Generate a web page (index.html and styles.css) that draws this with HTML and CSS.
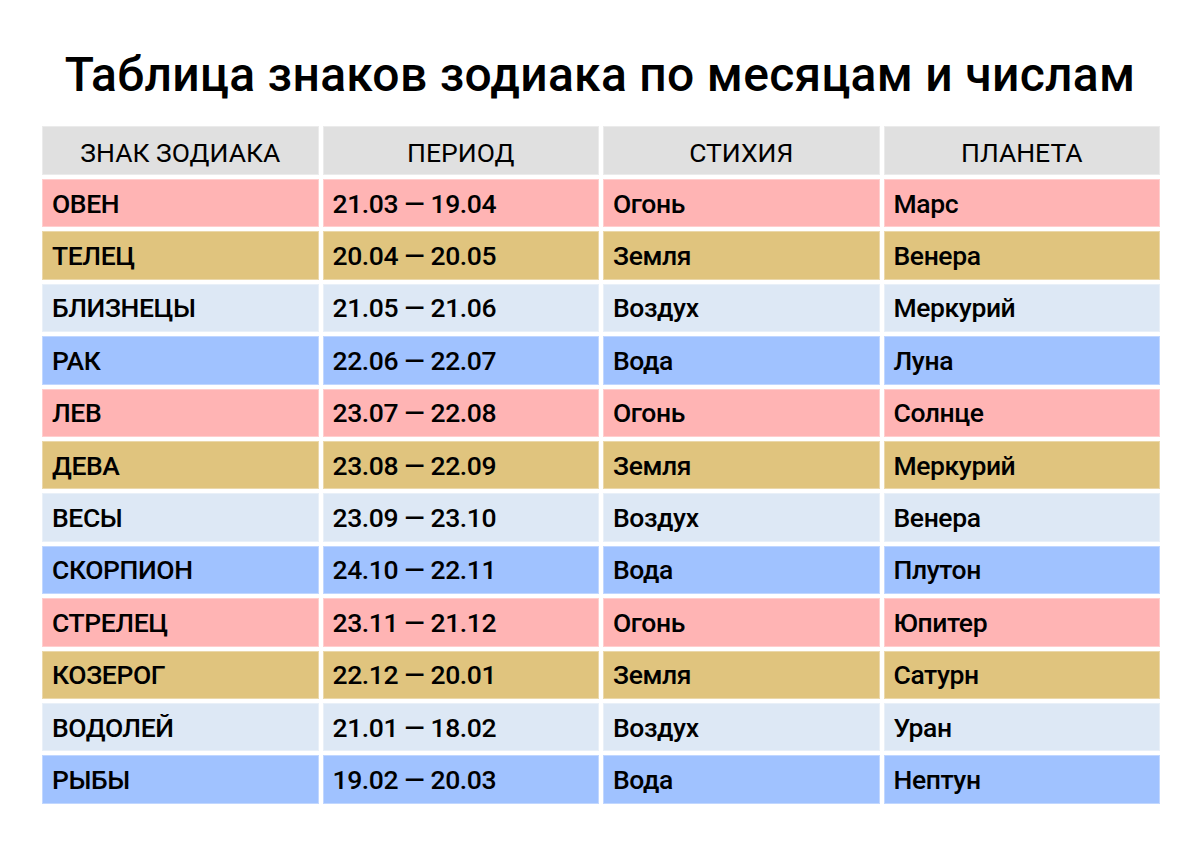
FILE: index.html
```html
<!DOCTYPE html>
<html lang="ru">
<head>
<meta charset="utf-8">
<title>Таблица знаков зодиака</title>
<link rel="stylesheet" href="styles.css">
</head>
<body>
<main class="page">
  <h1 class="title">Таблица знаков зодиака по месяцам и числам</h1>
  <div class="table">
    <div class="cell head">ЗНАК ЗОДИАКА</div>
    <div class="cell head">ПЕРИОД</div>
    <div class="cell head">СТИХИЯ</div>
    <div class="cell head">ПЛАНЕТА</div>

    <div class="cell fire">ОВЕН</div><div class="cell fire">21.03 — 19.04</div><div class="cell fire">Огонь</div><div class="cell fire">Марс</div>
    <div class="cell earth">ТЕЛЕЦ</div><div class="cell earth">20.04 — 20.05</div><div class="cell earth">Земля</div><div class="cell earth">Венера</div>
    <div class="cell air">БЛИЗНЕЦЫ</div><div class="cell air">21.05 — 21.06</div><div class="cell air">Воздух</div><div class="cell air">Меркурий</div>
    <div class="cell water">РАК</div><div class="cell water">22.06 — 22.07</div><div class="cell water">Вода</div><div class="cell water">Луна</div>
    <div class="cell fire">ЛЕВ</div><div class="cell fire">23.07 — 22.08</div><div class="cell fire">Огонь</div><div class="cell fire">Солнце</div>
    <div class="cell earth">ДЕВА</div><div class="cell earth">23.08 — 22.09</div><div class="cell earth">Земля</div><div class="cell earth">Меркурий</div>
    <div class="cell air">ВЕСЫ</div><div class="cell air">23.09 — 23.10</div><div class="cell air">Воздух</div><div class="cell air">Венера</div>
    <div class="cell water">СКОРПИОН</div><div class="cell water">24.10 — 22.11</div><div class="cell water">Вода</div><div class="cell water">Плутон</div>
    <div class="cell fire">СТРЕЛЕЦ</div><div class="cell fire">23.11 — 21.12</div><div class="cell fire">Огонь</div><div class="cell fire">Юпитер</div>
    <div class="cell earth">КОЗЕРОГ</div><div class="cell earth">22.12 — 20.01</div><div class="cell earth">Земля</div><div class="cell earth">Сатурн</div>
    <div class="cell air">ВОДОЛЕЙ</div><div class="cell air">21.01 — 18.02</div><div class="cell air">Воздух</div><div class="cell air">Уран</div>
    <div class="cell water">РЫБЫ</div><div class="cell water">19.02 — 20.03</div><div class="cell water">Вода</div><div class="cell water">Нептун</div>
  </div>
</main>
</body>
</html>
```

FILE: styles.css
```css
html, body {
  margin: 0;
  padding: 0;
  background: #ffffff;
}

.page {
  width: 1200px;
  height: 849px;
  font-family: Roboto, "Noto Sans", "Liberation Sans", sans-serif;
  color: #000;
}

.title {
  margin: 0;
  padding-top: 45px;
  height: 126px;
  box-sizing: border-box;
  text-align: center;
  font-size: 48px;
  font-weight: 500;
  line-height: 60px;
  letter-spacing: 0.3px;
  white-space: nowrap;
}

.table {
  margin-left: 42px;
  width: 1118px;
  display: grid;
  grid-template-columns: repeat(4, 1fr);
  grid-template-rows: 49px;
  grid-auto-rows: 48.4px;
  gap: 4px;
}

.cell {
  display: flex;
  align-items: center;
  padding: 0 10px;
  font-size: 26.5px;
  font-weight: 500;
  letter-spacing: -0.4px;
  white-space: nowrap;
  box-shadow: inset 0 0 0 1px rgba(255, 255, 255, 0.35);
}

.head {
  justify-content: center;
  background: #e0e0e0;
  padding-top: 4px;
  font-weight: 400;
  letter-spacing: 0;
}

.fire { background: #ffb4b4; }
.earth { background: #e0c47e; }
.air { background: #dde8f5; }
.water { background: #a0c2ff; }
```
